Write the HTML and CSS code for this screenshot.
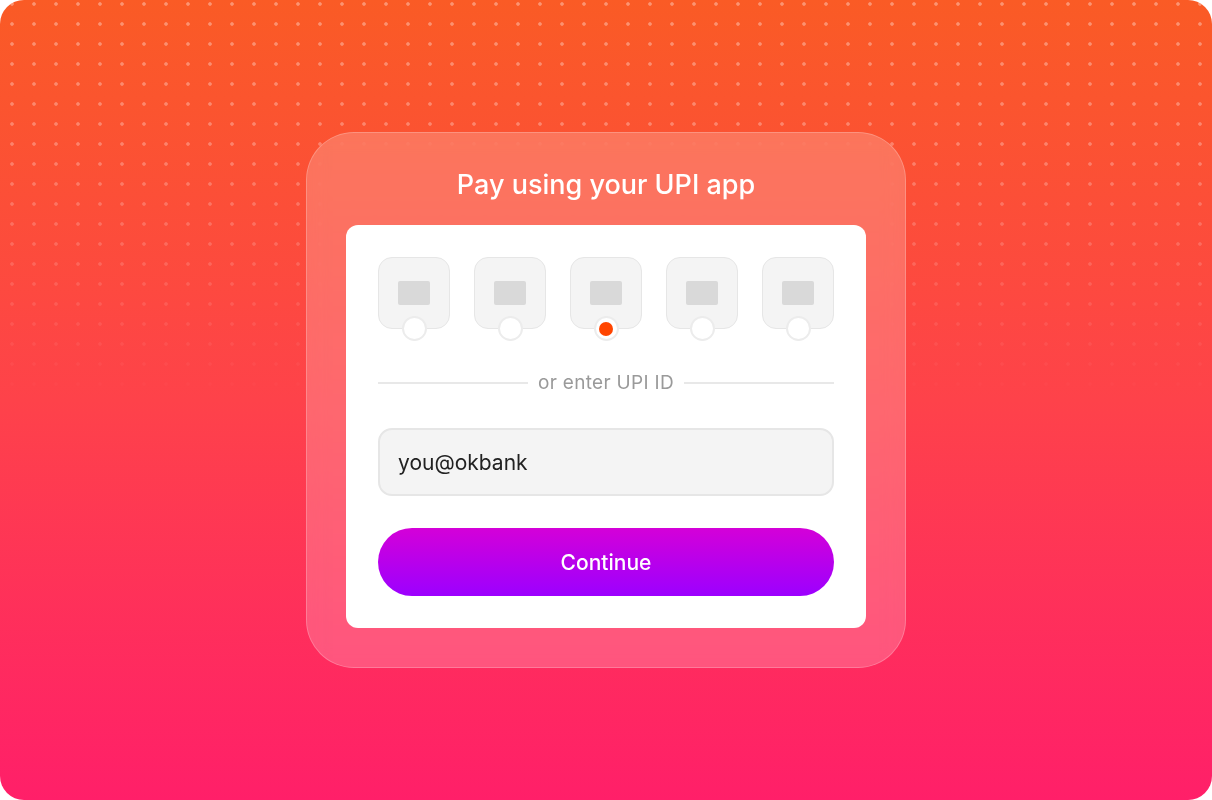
FILE: index.html
```html
<!DOCTYPE html>
<html>
<head>
<meta charset="utf-8">
<link rel="stylesheet" href="styles.css">
</head>
<body>
<div class="page">
  <div class="dots"></div>
  <div class="card">
    <h1 class="title">Pay using your UPI app</h1>
    <div class="panel">
      <div class="apps">
        <div class="app"><div class="logo"></div><span class="radio"></span></div>
        <div class="app"><div class="logo"></div><span class="radio"></span></div>
        <div class="app"><div class="logo"></div><span class="radio selected"></span></div>
        <div class="app"><div class="logo"></div><span class="radio"></span></div>
        <div class="app"><div class="logo"></div><span class="radio"></span></div>
      </div>
      <div class="divider"><span>or enter UPI ID</span></div>
      <div class="input">you@okbank</div>
      <button class="btn">Continue</button>
    </div>
  </div>
</div>
</body>
</html>
```
FILE: styles.css
```css
* { box-sizing: border-box; }
html, body { margin: 0; padding: 0; background: #fff; }
body { font-family: Inter, "Noto Sans", sans-serif; }
.page {
  position: relative;
  width: 1212px;
  height: 800px;
  border-radius: 24px;
  overflow: hidden;
  background: linear-gradient(180deg, #fa5b25 0%, #fe424a 50%, #ff1f69 100%);
  display: flex;
  align-items: center;
  justify-content: center;
}
.dots {
  position: absolute;
  inset: 0;
  background-image: radial-gradient(circle, rgba(255,255,255,0.35) 1.4px, rgba(255,255,255,0) 2.2px);
  background-size: 22px 20px;
  background-position: 1px -6px;
  -webkit-mask-image: linear-gradient(180deg, #000 0px, rgba(0,0,0,0.8) 150px, rgba(0,0,0,0) 400px);
  mask-image: linear-gradient(180deg, #000 0px, rgba(0,0,0,0.8) 150px, rgba(0,0,0,0) 400px);
}
.card {
  position: relative;
  width: 600px;
  padding: 36px 39px 39px;
  border-radius: 48px;
  background: rgba(255,255,255,0.2);
  border: 1px solid rgba(255,255,255,0.22);
  -webkit-backdrop-filter: blur(10px);
  backdrop-filter: blur(10px);
}
.title {
  margin: 0 0 24px;
  text-align: center;
  color: #fff;
  font-size: 27px;
  line-height: 32px;
  font-weight: 500;
  letter-spacing: 0;
}
.panel {
  background: #fff;
  border-radius: 12px;
  padding: 32px;
}
.apps {
  display: flex;
  gap: 24px;
}
.app {
  position: relative;
  width: 72px;
  height: 72px;
  border-radius: 14px;
  background: #f4f4f4;
  border: 1.5px solid #e6e6e6;
  display: flex;
  align-items: center;
  justify-content: center;
}
.logo {
  width: 32px;
  height: 24px;
  border-radius: 2px;
  background: #d9d9d9;
}
.radio {
  position: absolute;
  left: 50%;
  bottom: -13px;
  width: 25px;
  height: 25px;
  margin-left: -12.5px;
  border-radius: 50%;
  background: #fff;
  border: 2px solid #ececec;
}
.radio.selected::after {
  content: "";
  position: absolute;
  left: 3.5px;
  top: 3.5px;
  width: 14px;
  height: 14px;
  border-radius: 50%;
  background: #ff4500;
}
.divider {
  display: flex;
  align-items: center;
  gap: 10px;
  margin-top: 42px;
  color: #9a9a9a;
  font-size: 19px;
  line-height: 24px;
  letter-spacing: 0.3px;
}
.divider::before, .divider::after {
  content: "";
  flex: 1;
  height: 1.5px;
  background: #e8e8e8;
}
.input {
  margin-top: 33px;
  height: 68px;
  border-radius: 14px;
  background: #f4f4f4;
  border: 2px solid #e6e6e6;
  padding: 0 18px;
  display: flex;
  align-items: center;
  color: #222;
  font-size: 21px;
}
.btn {
  display: block;
  width: 100%;
  margin-top: 32px;
  height: 68px;
  border: 0;
  border-radius: 34px;
  background: linear-gradient(180deg, #d400d8 0%, #9c00ff 100%);
  color: #fff;
  font-family: inherit;
  font-size: 21px;
  font-weight: 500;
}
```
